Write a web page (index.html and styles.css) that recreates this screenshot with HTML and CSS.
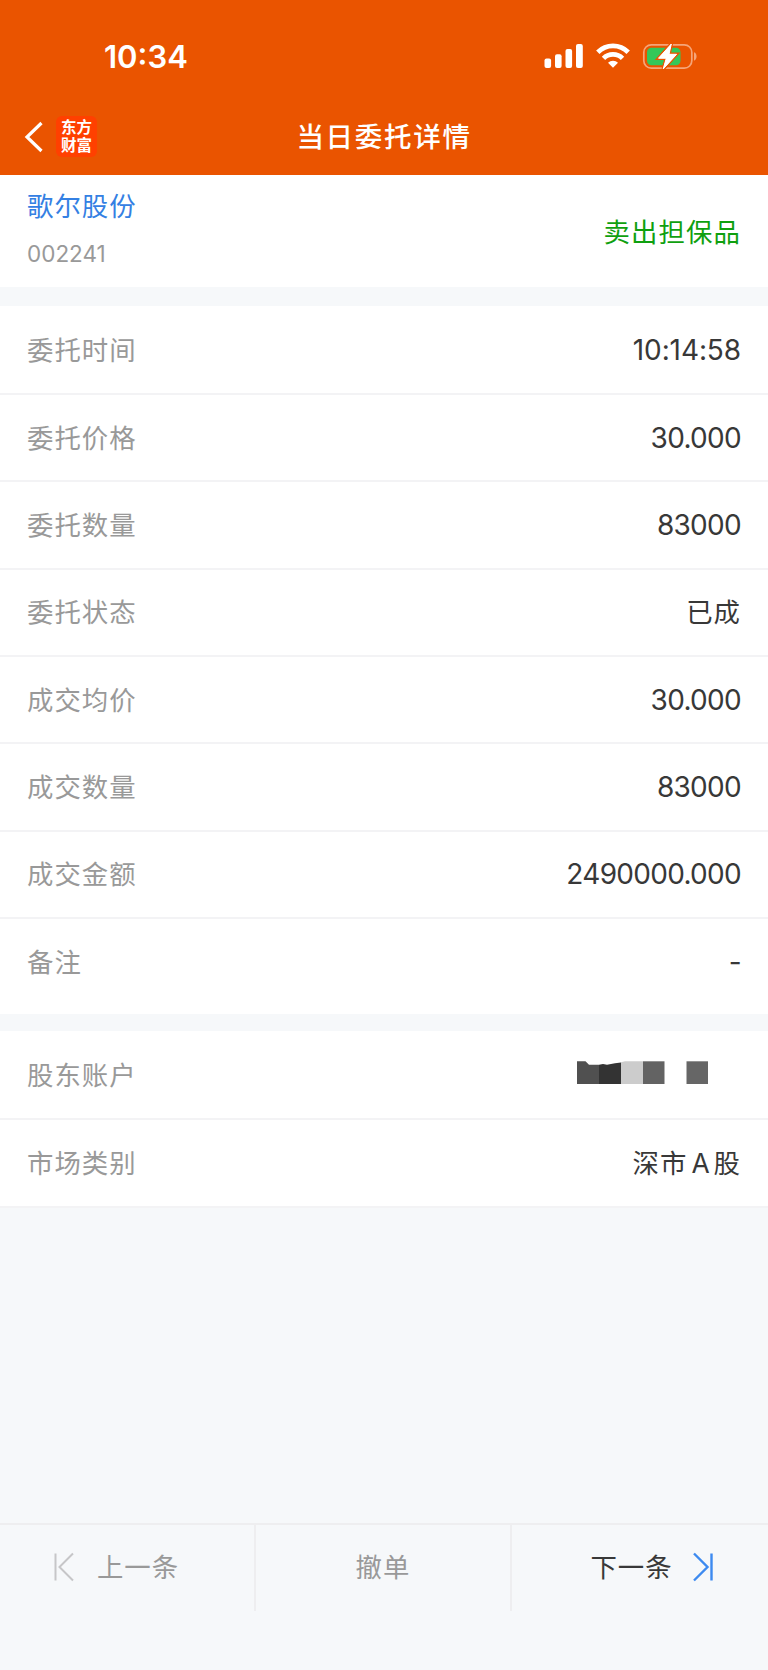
FILE: index.html
```html
<!DOCTYPE html>
<html lang="zh-CN">
<head>
  <meta charset="UTF-8" />
  <meta name="viewport" content="width=device-width, initial-scale=1.0" />
  <title>当日委托详情</title>
  <link rel="stylesheet" href="styles.css">
</head>
<body>
  <header class="header">
    <div class="status-bar">
      <div class="clock">10:34</div>
      <div class="status-icons">
        <!-- 信号 -->
        <svg width="40" height="26" viewBox="0 0 40 26" fill="#fff">
          <rect x="1.5" y="15.5" width="6.6" height="9.5" rx="2" />
          <rect x="12" y="11.3" width="6.6" height="13.7" rx="2" />
          <rect x="22.5" y="6" width="6.6" height="19" rx="2" />
          <rect x="33" y="1" width="6.8" height="24" rx="2" />
        </svg>
        <!-- WiFi -->
        <svg class="wifi" width="36" height="26" viewBox="0 0 36 26" fill="none" stroke="#fff" stroke-width="4.8">
          <path d="M2.8 9.2a21.6 21.6 0 0 1 30.4 0" />
          <path d="M8.5 15.4a13.4 13.4 0 0 1 19 0" />
          <path d="M18 24.8l-5-5.1a7.2 7.2 0 0 1 10 0z" fill="#fff" stroke="none" />
        </svg>
        <!-- 电池 -->
        <svg class="battery" width="56" height="28" viewBox="0 0 56 28">
          <rect x="1.8" y="2.8" width="48" height="23.4" rx="7.5" fill="none" stroke="#f5a578" stroke-width="1.7" />
          <path d="M52 10.3c3.4.9 3.4 7.5 0 8.4z" fill="#f5a578" />
          <rect x="5" y="5.8" width="33.5" height="17.4" rx="4.5" fill="#34c759" />
          <path d="M29.3 2L16.5 16.2h7.8L21.2 27l13.4-14.7h-7.6z" fill="#fff" stroke="#ea5400" stroke-width="3.4" paint-order="stroke" />
          <path d="M29.3 2L16.5 16.2h7.8L21.2 27l13.4-14.7h-7.6z" fill="#fff" stroke="#fff" stroke-width="1" stroke-linejoin="round" />
        </svg>
      </div>
    </div>
    <div class="nav-bar">
      <div class="nav-left">
        <svg class="back" width="20" height="32" viewBox="0 0 20 32" fill="none" stroke="#fff" stroke-width="3.2">
          <path d="M17.5 2L3 16l14.5 14" />
        </svg>
        <div class="logo"><span>东方</span><span>财富</span></div>
      </div>
      <h1 class="title">当日委托详情</h1>
    </div>
  </header>

  <section class="summary">
    <div>
      <div class="stock-name">歌尔股份</div>
      <div class="stock-code">002241</div>
    </div>
    <div class="side">卖出担保品</div>
  </section>

  <section class="group orders">
    <div class="row"><span class="label">委托时间</span><span class="value time">10:14:58</span></div>
    <div class="row"><span class="label">委托价格</span><span class="value">30.000</span></div>
    <div class="row"><span class="label">委托数量</span><span class="value">83000</span></div>
    <div class="row"><span class="label">委托状态</span><span class="value cn">已成</span></div>
    <div class="row"><span class="label">成交均价</span><span class="value">30.000</span></div>
    <div class="row"><span class="label">成交数量</span><span class="value">83000</span></div>
    <div class="row"><span class="label">成交金额</span><span class="value">2490000.000</span></div>
    <div class="row"><span class="label">备注</span><span class="value">-</span></div>
  </section>

  <section class="group account">
    <div class="row">
      <span class="label">股东账户</span>
      <!-- 账号打码 -->
      <svg class="mask" width="132" height="23" viewBox="0 0 132 23">
        <path d="M0 .3h8.5l3.5 3.4h10V23H0z" fill="#505050" />
        <path d="M22 3.7l4-.7 4 .8 8-1.6 6-.8V23H22z" fill="#333" />
        <path d="M44 1.2l4-.9h18V23H44z" fill="#ccc" />
        <path d="M66 .3h21.5V23H66z" fill="#636363" />
        <path d="M109.5 .3H131V23h-21.5z" fill="#666" />
      </svg>
    </div>
    <div class="row"><span class="label">市场类别</span><span class="value cn">深市<span class="latin">A</span>股</span></div>
  </section>

  <footer class="actions">
    <div class="action prev">
      <svg width="22" height="30" viewBox="0 0 22 30" fill="none" stroke="#c6c6c8" stroke-width="2">
        <path d="M2.5 1.5v27M20 1.5L6.5 15 20 28.5" />
      </svg>
      <span>上一条</span>
    </div>
    <div class="action"><span>撤单</span></div>
    <div class="action next">
      <span>下一条</span>
      <svg width="22" height="30" viewBox="0 0 22 30" fill="none" stroke="#3d8af0" stroke-width="2.4">
        <path d="M19.5 1.5v27M2 1.5L15.5 15 2 28.5" />
      </svg>
    </div>
  </footer>
</body>
</html>
```

FILE: styles.css
```css
* {
  box-sizing: border-box;
}
body {
  margin: 0;
  height: 1670px;
  display: flex;
  flex-direction: column;
  font-family: Inter, "Noto Sans CJK SC", sans-serif;
  background-color: #f6f8fa;
  color: #383838;
}
svg {
  display: block;
}
.header {
  height: 175px;
  background-color: #ea5400;
  color: #fff;
}
.status-bar {
  height: 100px;
  padding: 14px 70px 0 104px;
  display: flex;
  justify-content: space-between;
  align-items: center;
}
.clock {
  font-size: 31px;
  line-height: 40px;
  font-weight: 600;
}
.status-icons {
  display: flex;
  align-items: center;
  margin-top: -15px;
  padding-top: 12px;
}
.wifi {
  margin-left: 12px;
}
.battery {
  margin-left: 11px;
}
.nav-bar {
  height: 75px;
  display: grid;
  grid-template-columns: 1fr auto 1fr;
  align-items: center;
}
.nav-left {
  display: flex;
  align-items: center;
  padding-left: 24px;
  padding-bottom: 2px;
}
.logo {
  width: 41px;
  height: 41px;
  margin-left: 12px;
  padding-top: 3px;
  border-radius: 6px;
  background-color: #ff4000;
  display: flex;
  flex-direction: column;
  align-items: center;
  font-size: 15.5px;
  line-height: 17.5px;
  font-weight: 700;
}
.title {
  margin: 0;
  padding-bottom: 1px;
  font-size: 27.5px;
  line-height: 40px;
  font-weight: 500;
  letter-spacing: 1.7px;
}
.summary {
  height: 112px;
  padding: 0 27px;
  display: flex;
  justify-content: space-between;
  align-items: center;
  background-color: #fff;
}
.stock-name {
  font-size: 26.4px;
  line-height: 40px;
  letter-spacing: 1px;
  color: #3480e3;
}
.stock-code {
  margin-top: 10px;
  margin-bottom: 4px;
  font-size: 22.5px;
  line-height: 36px;
  color: #999;
}
.side {
  font-size: 26.4px;
  letter-spacing: 1.1px;
  padding-bottom: 2px;
  color: #0fa00f;
}
.group {
  background-color: #fff;
}
.orders {
  height: 708px;
  margin-top: 19px;
}
.account {
  margin-top: 17px;
}
.row {
  height: 87.35px;
  padding: 0 27px;
  display: flex;
  justify-content: space-between;
  align-items: center;
  border-bottom: 2px solid #f3f3f5;
}
.orders .row:first-child {
  height: 89px;
}
.orders .row:last-child {
  padding-bottom: 2px;
  border-bottom: none;
}
.account .row {
  height: 88px;
}
.account .row:first-child {
  height: 89px;
}
.label {
  padding-bottom: 3px;
  font-size: 26.4px;
  letter-spacing: 1px;
  color: #999;
}
.value {
  font-size: 28px;
  letter-spacing: -0.7px;
}
.time {
  letter-spacing: -0.1px;
}
.cn {
  padding-bottom: 4px;
  font-size: 26.4px;
  letter-spacing: 1px;
}
.latin {
  margin: 0 3px 0 4px;
}
.mask {
  margin-right: 32px;
  margin-bottom: 4px;
}
.actions {
  height: 147px;
  margin-top: auto;
  border-top: 2px solid #eeeef0;
  display: grid;
  grid-template-columns: repeat(3, 1fr);
}
.action {
  height: 86px;
  display: flex;
  justify-content: center;
  align-items: center;
  gap: 22px;
  padding-bottom: 2px;
  border-right: 2px solid #eeeef0;
  font-size: 26.4px;
  letter-spacing: 1px;
  color: #999;
}
.action span {
  padding-bottom: 4px;
}
.prev {
  padding-right: 22px;
}
.next {
  gap: 19px;
  padding-left: 24px;
  border-right: none;
  color: #383838;
}
```
